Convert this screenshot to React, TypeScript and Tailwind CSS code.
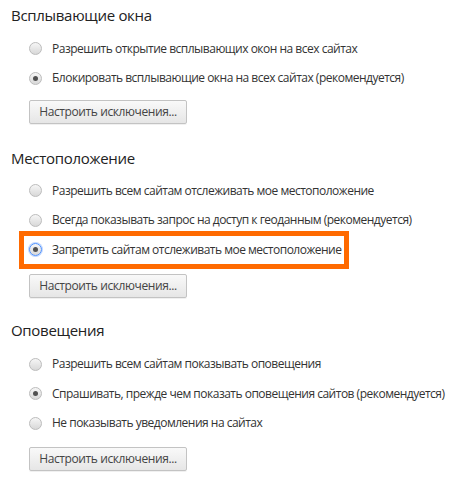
import { useState } from 'react'

type Section = {
  title: string
  options: string[]
  selected: number
  rowGap: string
  buttonGap: string
}

const sections: Section[] = [
  {
    title: 'Всплывающие окна',
    options: [
      'Разрешить открытие всплывающих окон на всех сайтах',
      'Блокировать всплывающие окна на всех сайтах (рекомендуется)',
    ],
    selected: 1,
    rowGap: 'mt-[4px]',
    buttonGap: 'mt-[7px]',
  },
  {
    title: 'Местоположение',
    options: [
      'Разрешить всем сайтам отслеживать мое местоположение',
      'Всегда показывать запрос на доступ к геоданным (рекомендуется)',
      'Запретить сайтам отслеживать мое местоположение',
    ],
    selected: 2,
    rowGap: 'mt-[3px]',
    buttonGap: 'mt-[9px]',
  },
  {
    title: 'Оповещения',
    options: [
      'Разрешить всем сайтам показывать оповещения',
      'Спрашивать, прежде чем показать оповещения сайтов (рекомендуется)',
      'Не показывать уведомления на сайтах',
    ],
    selected: 1,
    rowGap: 'mt-[4px]',
    buttonGap: 'mt-[9px]',
  },
]

function Radio({ checked, focused }: { checked: boolean; focused?: boolean }) {
  return (
    <span
      className={`flex items-center justify-center w-[13px] h-[13px] rounded-full border shrink-0 bg-gradient-to-b from-[#f6f6f6] to-[#d8d8d8] ${
        focused ? 'border-[#4d90fe] shadow-[0_0_0_1px_rgba(77,144,254,0.35)]' : 'border-[#bcbcbc]'
      }`}
    >
      {checked && <span className="w-[5px] h-[5px] rounded-full bg-[#505050]" />}
    </span>
  )
}

export default function App() {
  const [values, setValues] = useState(sections.map(s => s.selected))

  return (
    <div
      className="w-[472px] h-[489px] bg-white text-[#333] overflow-hidden"
      style={{ fontFamily: '"Open Sans", "Noto Sans", sans-serif' }}
    >
      {sections.map((section, si) => (
        <div key={section.title} className={si === 0 ? '' : si === 1 ? 'mt-[19px]' : 'mt-[18px]'}>
          <div className="h-[30px] flex items-center pl-[11px] text-[15px] text-[#222] tracking-[-0.3px]">
            {section.title}
          </div>
          <div className={section.rowGap}>
            {section.options.map((option, oi) => {
              const checked = values[si] === oi
              const highlighted = si === 1 && oi === 2
              return (
                <div key={option} className="h-[29.5px] flex items-center">
                  <label
                    className={`flex items-center cursor-pointer ${
                      highlighted
                        ? 'ml-[19px] w-[330px] h-[38px] border-[5px] border-[#ff6a00] pl-[5px]'
                        : 'ml-[29px]'
                    }`}
                    onClick={() => setValues(v => v.map((x, i) => (i === si ? oi : x)))}
                  >
                    <Radio checked={checked} focused={highlighted} />
                    <span className="ml-[10px] text-[12px] tracking-[-0.5px] whitespace-nowrap">
                      {option}
                    </span>
                  </label>
                </div>
              )
            })}
          </div>
          <button
            className={`${section.buttonGap} ml-[29px] w-[158px] h-[24px] border border-[#c3c3c3] rounded-[2px] bg-gradient-to-b from-[#f9f9f9] to-[#e6e6e6] text-[12px] text-[#444] tracking-[-0.4px] shadow-[0_1px_0_rgba(0,0,0,0.06)]`}
          >
            Настроить исключения...
          </button>
        </div>
      ))}
    </div>
  )
}
